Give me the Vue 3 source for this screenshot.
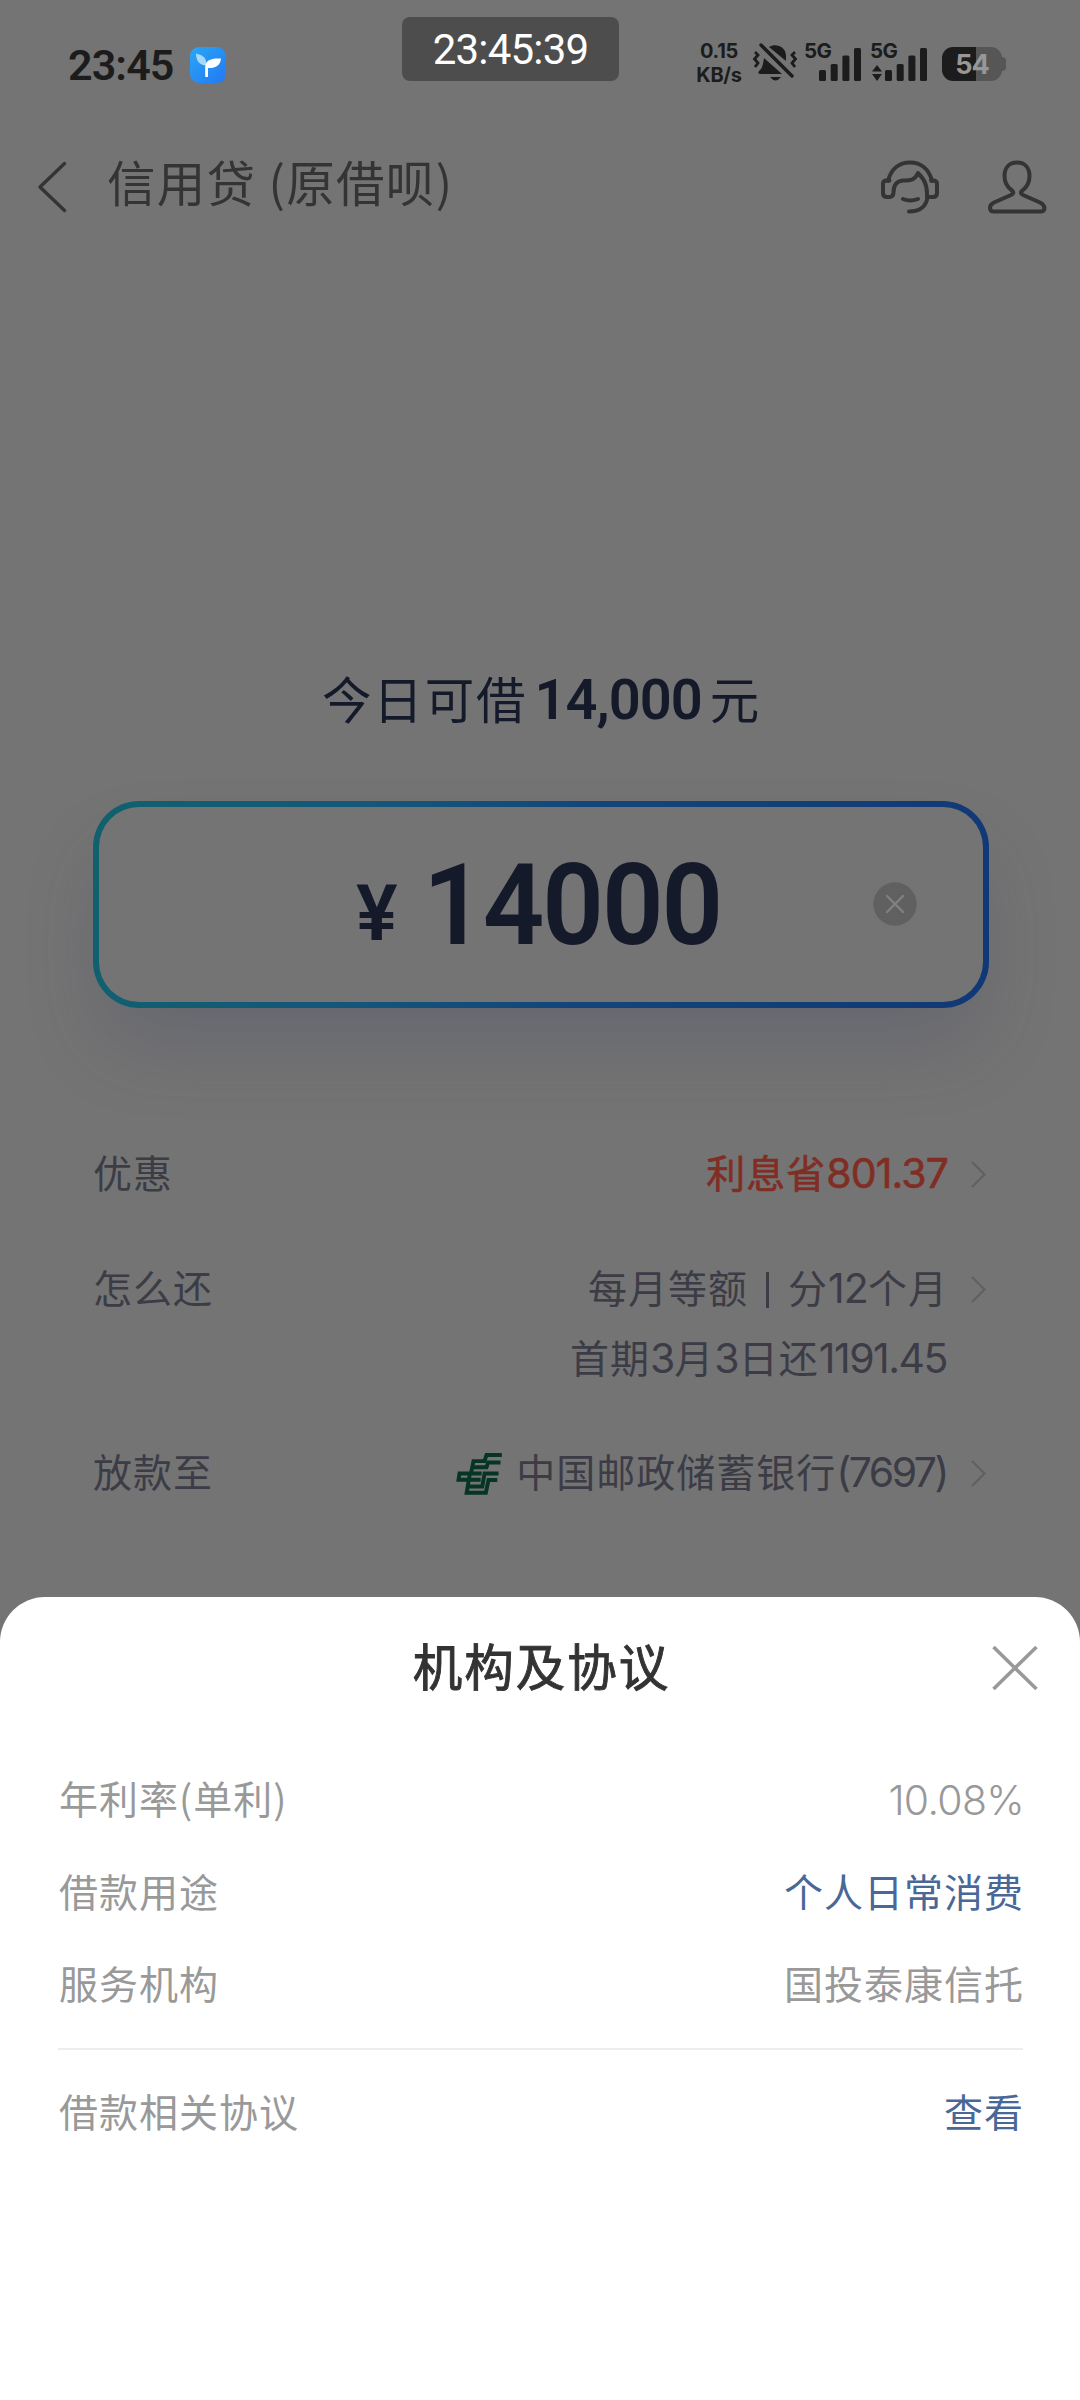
<script setup>
const details = [
  { label: '年利率(单利)', value: '10.08%', kind: 'num' },
  { label: '借款用途', value: '个人日常消费', kind: 'link' },
  { label: '服务机构', value: '国投泰康信托', kind: '' },
]
const bars = [
  { x: 0, h: 11 },
  { x: 11.7, h: 17 },
  { x: 23.4, h: 25.5 },
  { x: 35, h: 33 },
]
</script>

<template>
  <div class="screen">
    <div class="status">
      <span class="time">23:45</span>
      <svg class="app-icon" viewBox="0 0 36 36">
        <defs>
          <linearGradient id="leafBg" x1="0" y1="0" x2="1" y2="1">
            <stop offset="0" stop-color="#2aa6f6" />
            <stop offset="1" stop-color="#2379f2" />
          </linearGradient>
        </defs>
        <rect width="36" height="36" rx="9" fill="url(#leafBg)" />
        <path d="M6 6.500C13 8 17 11 16.200 18.500C9.500 18 6 14 6 6.500Z" fill="#a6d8fb" />
        <path d="M31 11.500C30.500 18.500 25 21.500 18 21V30H15.200V20C15.500 13.500 20 11 31 11.500Z" fill="#fff" />
      </svg>
      <div class="right-status">
        <div class="speed"><span>0.15</span><span>KB/s</span></div>
        <svg class="bell" viewBox="0 0 44 38" fill="#1c1c1c">
          <path d="M16 4C22 0 33 3 33 13V18Z" />
          <path d="M11 15L29 31H8Q4 31 6 28C10 25 10 20 11 15Z" />
          <path d="M17 34H28Q22.500 41 17 34Z" />
          <path d="M8 2L39 33" stroke="#1c1c1c" stroke-width="3.400" stroke-linecap="round" />
          <path d="M2 9L5 12L1.500 16L5 20L2 24M42 9L39 12L42.500 16L39 20L42 24" fill="none" stroke="#1c1c1c" stroke-width="2.800" />
        </svg>
        <div class="signal first">
          <span class="net">5G</span>
          <svg viewBox="0 0 43 34" class="bars"><rect v-for="b in bars" :key="b.x" :x="b.x" :y="34 - b.h" width="7" :height="b.h" rx="1.500" fill="#1c1c1c" /></svg>
        </div>
        <div class="signal second">
          <span class="net">5G</span>
          <svg class="arrows" viewBox="0 0 10 16" fill="#1c1c1c"><path d="M5 0L10 6.500H0ZM5 16L0 9H10Z" /></svg>
          <svg viewBox="0 0 43 34" class="bars"><rect v-for="b in bars" :key="b.x" :x="b.x" :y="34 - b.h" width="7" :height="b.h" rx="1.500" fill="#1c1c1c" /></svg>
        </div>
        <div class="battery"><div class="cell"><span>54</span></div><i></i></div>
      </div>
      <div class="clock">23:45:39</div>
    </div>

    <div class="nav">
      <svg class="back" viewBox="0 0 28 50"><path d="M26.500 1.500L2 25L26.500 48.500" /></svg>
      <span class="nav-title">信用贷 (原借呗)</span>
      <svg class="service" viewBox="0 0 58 54">
        <path d="M7 21C10 9 18 2.500 29 2.500S48 9 51 21" />
        <path d="M8.500 20.500H5.500Q2 20.500 2 24V33Q2 37 6 37H8.500Q12.500 37 12.500 32.500C12.500 25 16 21 22 20.500C30 20.500 34 20 37 13C42 18 46 23 46 34V37H52Q56 37 56 33V24Q56 20.500 52 20.500H50" />
        <path d="M46.500 37C45.500 46 39 51.500 28 51.500M22 39Q29 42 37 39" />
      </svg>
      <svg class="user" viewBox="0 0 58 54">
        <path d="M29 2.500C21 2.500 16.500 8 16.500 16C16.500 23 19 27 24 30.500Q27 33 23 35L6 42.500Q2 44.500 2 48Q2 51.500 6 51.500H52Q56.500 51.500 56.500 48Q56 44.500 52 42.500L35 35Q31 33 34.500 30.500C39 27 41.500 23 41.500 16C41.500 8 37 2.500 29 2.500Z" />
      </svg>
    </div>

    <div class="quota"><span>今日可借</span><b>14,000</b><span>元</span></div>

    <div class="amount">
      <div class="amount-inner">
        <span class="yen">¥</span><span class="value">14000</span>
        <svg class="clear" viewBox="0 0 44 44"><circle cx="22" cy="22" r="21.700" fill="#606060" /><path d="M14 14L30 30M30 14L14 30" stroke="#808080" stroke-width="2.400" stroke-linecap="round" /></svg>
      </div>
    </div>

    <div class="rows">
      <div class="row">
        <span class="label">优惠</span>
        <span class="val red">利息省<i class="n">801.37</i></span>
        <svg class="arrow" viewBox="0 0 15 27"><path d="M1 1L13.500 13.500L1 26" /></svg>
      </div>
      <div class="row repay">
        <span class="label">怎么还</span>
        <span class="val">每月等额<i class="sep"></i>分<i class="n">12</i>个月</span>
        <svg class="arrow" viewBox="0 0 15 27"><path d="M1 1L13.500 13.500L1 26" /></svg>
      </div>
      <div class="row sub">
        <span class="val">首期<i class="n">3</i>月<i class="n">3</i>日还<i class="n sum">1191.45</i></span>
      </div>
      <div class="row bank">
        <span class="label">放款至</span>
        <svg class="bank-logo" viewBox="24 22 140 132" fill="none" stroke="#063425" stroke-width="12">
          <path d="M161 31H114L108 50H74L67 84" />
          <path d="M157 54H119L114 69H74" />
          <path d="M99 88H31L28 107H96" />
          <path d="M63 88L53 147H112L120 108H147" />
          <path d="M60 128H101L108 88H151" />
        </svg>
        <span class="val">中国邮政储蓄银行<i class="n card">(7697)</i></span>
        <svg class="arrow" viewBox="0 0 15 27"><path d="M1 1L13.500 13.500L1 26" /></svg>
      </div>
    </div>

    <div class="sheet">
      <div class="sheet-head">
        <span>机构及协议</span>
        <svg class="close" viewBox="0 0 46 44"><path d="M1.500 1L44.500 43M44.500 1L1.500 43" /></svg>
      </div>
      <div v-for="d in details" :key="d.label" class="item">
        <span>{{ d.label }}</span><span :class="d.kind">{{ d.value }}</span>
      </div>
      <div class="line"></div>
      <div class="item last"><span>借款相关协议</span><span class="link">查看</span></div>
    </div>
  </div>
</template>

<style>
body { background: #747474; }
</style>

<style scoped>
.screen {
  position: relative; width: 1080px; height: 2400px; overflow: hidden;
  display: flex; flex-direction: column;
  background: #747474; color: #34343b;
  font-family: Inter, "Noto Sans CJK SC", sans-serif;
}
.screen * { box-sizing: border-box; }
svg { display: block; flex: none; overflow: visible; }
i { font-style: normal; }
.status { position: relative; height: 128px; display: flex; align-items: center; padding: 1px 74px 0 68px; color: #1c1c1c; }
.time { font-family: Roboto, sans-serif; font-size: 43px; font-weight: 600; letter-spacing: -0.900px; line-height: 50px; width: 122px; white-space: nowrap; }
.app-icon { width: 36px; height: 36px; }
.clock {
  position: absolute; left: 402px; top: 17px; width: 217px; height: 64px; border-radius: 8px;
  background: #4d4d4d; color: #fff; font-family: Roboto, sans-serif; font-size: 42px; line-height: 66px; text-align: center; letter-spacing: -0.800px;
}
.right-status { margin-left: auto; margin-top: -6px; display: flex; height: 38px; }
.speed { display: flex; flex-direction: column; align-items: center; width: 46px; font-size: 20px; font-weight: 700; line-height: 24px; margin-top: -4px; letter-spacing: -0.300px; }
.bell { width: 44px; height: 38px; margin-left: 11px; }
.signal { position: relative; display: flex; justify-content: flex-end; align-items: flex-end; }
.signal.first { width: 57px; margin-left: 8px; }
.signal.second { width: 57px; margin-left: 9px; }
.net { position: absolute; left: -1px; top: -5px; font-size: 20.500px; font-weight: 700; line-height: 25px; letter-spacing: -0.500px; }
.bars { width: 43px; height: 34px; }
.arrows { width: 10px; height: 16px; margin-right: 3px; }
.battery { display: flex; align-items: center; margin: 4px 0 0 14px; height: 34px; }
.cell { width: 60px; height: 34px; border-radius: 11px; background: linear-gradient(90deg, #1c1c1c 57%, #565656 57%); text-align: center; color: #979797; font-size: 27px; font-weight: 700; line-height: 35px; letter-spacing: -1px; }
.battery i { width: 4px; height: 14px; border-radius: 0 5px 5px 0; background: #565656; }

.nav { height: 118px; display: flex; align-items: center; padding: 0 34px 0 38px; }
.back { width: 28px; height: 50px; }
.back path, .service path, .user path { fill: none; stroke: #343434; stroke-width: 4; stroke-linecap: round; stroke-linejoin: round; }
.back path { stroke-width: 3.400; }
.nav-title { margin-left: 41px; font-size: 48.500px; line-height: 60px; letter-spacing: 1.300px; color: #343434; font-family: "Noto Sans CJK SC", sans-serif; white-space: nowrap; margin-top: -12px; }
.service { width: 58px; height: 54px; margin-left: auto; }
.user { width: 58px; height: 54px; margin-left: 49px; }

.quota { margin-top: 419px; height: 70px; display: flex; justify-content: center; align-items: baseline; color: #151a2a; font-size: 49.500px; line-height: 70px; letter-spacing: 1.900px; padding-left: 3px; }
.quota b { font-family: Roboto, sans-serif; font-weight: 600; font-size: 56px; letter-spacing: -1px; margin: 0 8px 0 7px; }

.amount { margin: 66px 91px 0 93px; height: 207px; padding: 6px; border-radius: 46px; background: linear-gradient(100deg, #10616e 0%, #14577a 30%, #13457a 55%, #113876 100%); box-shadow: 0 44px 76px -12px rgba(62, 64, 98, 0.260); }
.amount-inner { position: relative; height: 195px; border-radius: 40px; background: #747474; color: #151a2a; font-family: Roboto, sans-serif; font-weight: 600; display: flex; align-items: baseline; padding-left: 257px; }
.yen { font-size: 78px; line-height: 197px; width: 66px; }
.value { font-size: 113px; line-height: 190px; letter-spacing: -2.100px; transform: translate(1px, 4px) scaleX(0.955); transform-origin: 0 0; }
.clear { position: absolute; left: 774px; top: 75px; width: 44px; height: 44px; }

.rows { margin: 108px 93px 0; }
.row { display: flex; align-items: center; height: 115px; font-size: 39px; line-height: 60px; letter-spacing: 1px; color: #3c3c46; white-space: nowrap; }
.row.sub { height: 60px; justify-content: flex-end; padding-right: 40px; margin-top: -17px; }
.row.bank { margin-top: 26px; }
.label { flex: 1; }
.n { font-size: 41px; letter-spacing: -0.900px; line-height: 1; }
.n.sum { letter-spacing: -1.500px; }
.n.card { letter-spacing: -2.500px; margin-right: 1px; }
.sep { display: inline-block; width: 3px; height: 36px; margin: 0 19px 0 18px; background: #3c3c46; vertical-align: -5px; }
.red { color: #812d24; -webkit-text-stroke: 0.600px #812d24; }
.arrow { width: 15px; height: 27px; margin: 2px 1px 0 23px; }
.arrow path { fill: none; stroke: #616161; stroke-width: 2.200; }
.bank-logo { width: 46px; height: 43px; margin: 2px 13px 0 0; }

.sheet { position: absolute; left: 0; right: 0; top: 1597px; bottom: 0; border-radius: 45px 45px 0 0; background: #fff; padding: 0 56px 0 59px; color: #999; font-size: 39px; letter-spacing: 1px; line-height: 60px; }
.sheet-head { position: relative; height: 142px; line-height: 142px; font-size: 49.500px; letter-spacing: 2px; -webkit-text-stroke: 0.900px #333; text-align: center; color: #333; }
.close { position: absolute; right: -14px; top: 49px; width: 46px; height: 44px; }
.close path { stroke: #999; stroke-width: 3.600; }
.item { display: flex; justify-content: space-between; height: 92.500px; padding-top: 28px; font-family: "Noto Sans CJK SC", sans-serif; }
.num { font-family: Inter, sans-serif; font-size: 41px; font-weight: 350; letter-spacing: -0.700px; padding-top: 3px; }
.link { color: #496797; }
.line { height: 2px; margin: 31px 1px 0 -1px; background: #ededed; }
.item.last { padding-top: 30px; }
</style>
